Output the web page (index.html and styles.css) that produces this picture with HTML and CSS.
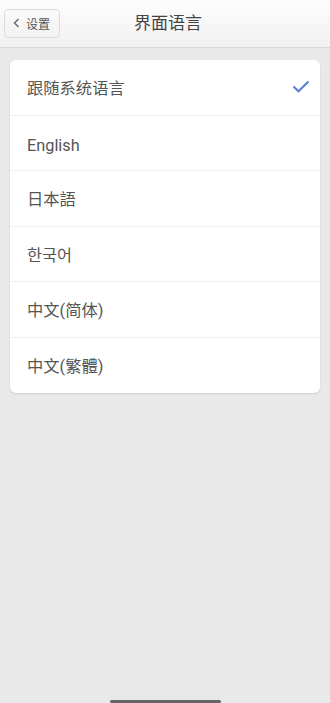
FILE: index.html
```html
<!DOCTYPE html>
<html lang="zh-CN">
<head>
<meta charset="utf-8">
<link rel="stylesheet" href="styles.css">
</head>
<body>
<div class="page">
  <header class="nav">
    <button class="back">
      <svg class="chev" width="7" height="10" viewBox="0 0 7 10"><path d="M5.5 1 L1.5 5 L5.5 9" fill="none" stroke="#666" stroke-width="1.4"/></svg>
      <span>设置</span>
    </button>
    <h1 class="title">界面语言</h1>
  </header>
  <ul class="card">
    <li class="row"><span>跟随系统语言</span>
      <svg class="check" width="18" height="13" viewBox="0 0 18 13"><path d="M1.5 6.5 L6.5 11.2 L16.5 1.5" fill="none" stroke="#5b80d8" stroke-width="2.2"/></svg>
    </li>
    <li class="row row-latin"><span>English</span></li>
    <li class="row"><span>日本語</span></li>
    <li class="row"><span>한국어</span></li>
    <li class="row"><span>中文(简体)</span></li>
    <li class="row"><span>中文(繁體)</span></li>
  </ul>
  <div class="spacer"></div>
  <div class="home"><div class="bar"></div></div>
</div>
</body>
</html>
```

FILE: styles.css
```css
* { box-sizing: border-box; }
html, body { margin: 0; padding: 0; }
body {
  background: #e9e9ea;
  font-family: Roboto, "Noto Sans CJK SC", sans-serif;
  color: #555;
  width: 330px;
  height: 703px;
  overflow: hidden;
}
.page { display: flex; flex-direction: column; height: 703px; }
.nav {
  height: 48px;
  display: flex;
  align-items: center;
  position: relative;
  background: linear-gradient(#fdfdfd, #f1f1f1);
  border-bottom: 1px solid #d9d9d9;
  padding-left: 4px;
  flex-shrink: 0;
}
.back {
  height: 29px;
  width: 56px;
  margin-top: -1px;
  border: 1px solid #dcdcdc;
  border-radius: 4px;
  background: linear-gradient(#fafafa, #f2f2f2);
  display: flex;
  align-items: center;
  gap: 6px;
  padding: 0 0 0 8px;
  font-family: inherit;
  font-size: 12px;
  color: #555;
  position: relative;
  z-index: 1;
}
.title {
  position: absolute;
  left: 0; right: 0; top: 0;
  padding-left: 6px;
  line-height: 47px;
  margin: 0;
  text-align: center;
  font-size: 17px;
  font-weight: 400;
  color: #444;
}
.card {
  list-style: none;
  margin: 12px 10px 0;
  padding: 0;
  background: #fff;
  border-radius: 6px;
  box-shadow: 0 1px 2px rgba(0,0,0,0.12);
}
.row {
  height: 55.5px;
  display: flex;
  align-items: center;
  justify-content: space-between;
  padding: 0 10px 0 17px;
  font-size: 16.3px;
  color: #555;
  border-bottom: 1px solid #efefef;
}
.row-latin { padding-top: 5px; }
.row:last-child { border-bottom: none; }
.check { margin-top: -2px; }
.spacer { flex: 1; }
.home { height: 4px; display: flex; justify-content: center; }
.bar { width: 111px; height: 3px; margin-top: 1px; background: #666; border-radius: 2px; }
```
